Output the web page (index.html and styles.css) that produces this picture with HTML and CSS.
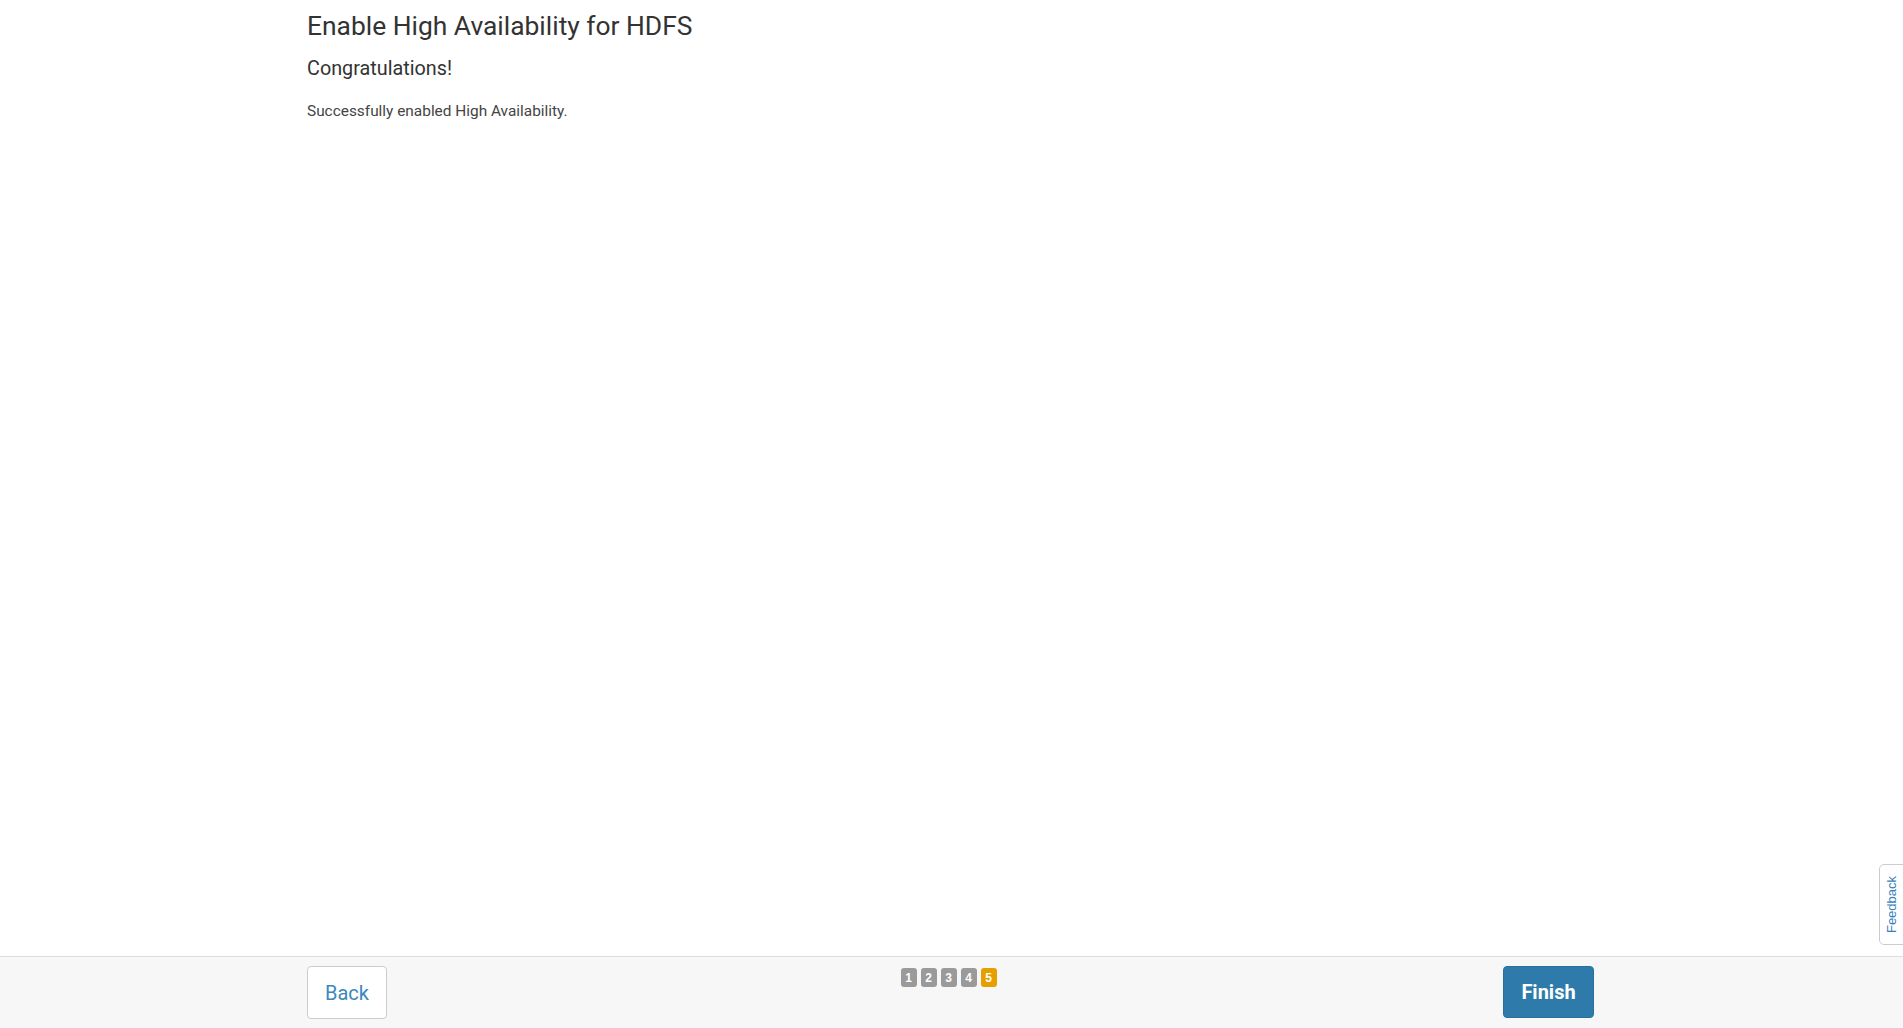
FILE: index.html
```html
<!DOCTYPE html>
<html>
<head>
<meta charset="utf-8">
<link rel="stylesheet" href="styles.css">
</head>
<body>
<div class="page">
  <main class="main">
    <div class="container">
      <h2 class="title">Enable High Availability for HDFS</h2>
      <h4 class="subtitle">Congratulations!</h4>
      <p class="text">Successfully enabled High Availability.</p>
    </div>
  </main>
  <footer class="footer">
    <div class="container footer-row">
      <button class="btn btn-back">Back</button>
      <div class="steps">
        <span class="step">1</span>
        <span class="step">2</span>
        <span class="step">3</span>
        <span class="step">4</span>
        <span class="step active">5</span>
      </div>
      <button class="btn btn-finish">Finish</button>
    </div>
  </footer>
</div>
<div class="feedback"><span>Feedback</span></div>
</body>
</html>
```
FILE: styles.css
```css
html, body {
  margin: 0;
  padding: 0;
  height: 100%;
  background: #fff;
  font-family: Roboto, "Liberation Sans", Arial, sans-serif;
  color: #333;
}
.page {
  display: flex;
  flex-direction: column;
  height: 100vh;
}
.main {
  flex: 1;
}
.container {
  width: 1289px;
  margin: 0 auto;
  box-sizing: border-box;
  padding-right: 2px;
}
.title {
  font-size: 26.4px;
  font-weight: 400;
  line-height: 29px;
  margin: 12px 0 0 0;
  color: #333;
}
.subtitle {
  font-size: 19.8px;
  font-weight: 400;
  line-height: 22px;
  margin: 17px 0 0 0;
  color: #333;
}
.text {
  font-size: 15.4px;
  line-height: 20px;
  margin: 21px 0 0 0;
  color: #444;
}
.footer {
  height: 71px;
  border-top: 1px solid #ddd;
  background: #f7f7f7;
  box-sizing: content-box;
}
.footer-row {
  display: flex;
  justify-content: space-between;
  align-items: flex-start;
  padding-top: 9px;
}
.btn {
  font-family: Roboto, "Liberation Sans", Arial, sans-serif;
  font-size: 20px;
  border-radius: 4px;
  cursor: pointer;
  box-sizing: border-box;
}
.btn-back {
  width: 80px;
  height: 53px;
  background: #fff;
  border: 1px solid #ccc;
  color: #3a88bd;
}
.btn-finish {
  width: 91px;
  height: 52px;
  background: #2e7bab;
  border: 1px solid #2a6f9c;
  color: #fff;
  font-weight: 700;
}
.steps {
  display: flex;
  gap: 4px;
  padding-top: 2px;
  margin-left: 7px;
}
.step {
  width: 16px;
  height: 19px;
  border-radius: 3px;
  background: #9a9a9a;
  color: #fff;
  font-family: "Liberation Sans", Arial, sans-serif;
  font-weight: 700;
  font-size: 12px;
  display: flex;
  align-items: center;
  justify-content: center;
}
.step.active {
  background: #e5a000;
}
.feedback {
  position: absolute;
  right: -4px;
  top: 864px;
  width: 28px;
  height: 81px;
  background: #fff;
  border: 1px solid #ccc;
  border-radius: 5px 0 0 5px;
  box-sizing: border-box;
  display: flex;
  align-items: center;
  justify-content: center;
}
.feedback span {
  transform: rotate(-90deg);
  font-family: "Liberation Sans", Arial, sans-serif;
  font-size: 13px;
  color: #3a7fc0;
  white-space: nowrap;
  margin-left: -3px;
}
```
